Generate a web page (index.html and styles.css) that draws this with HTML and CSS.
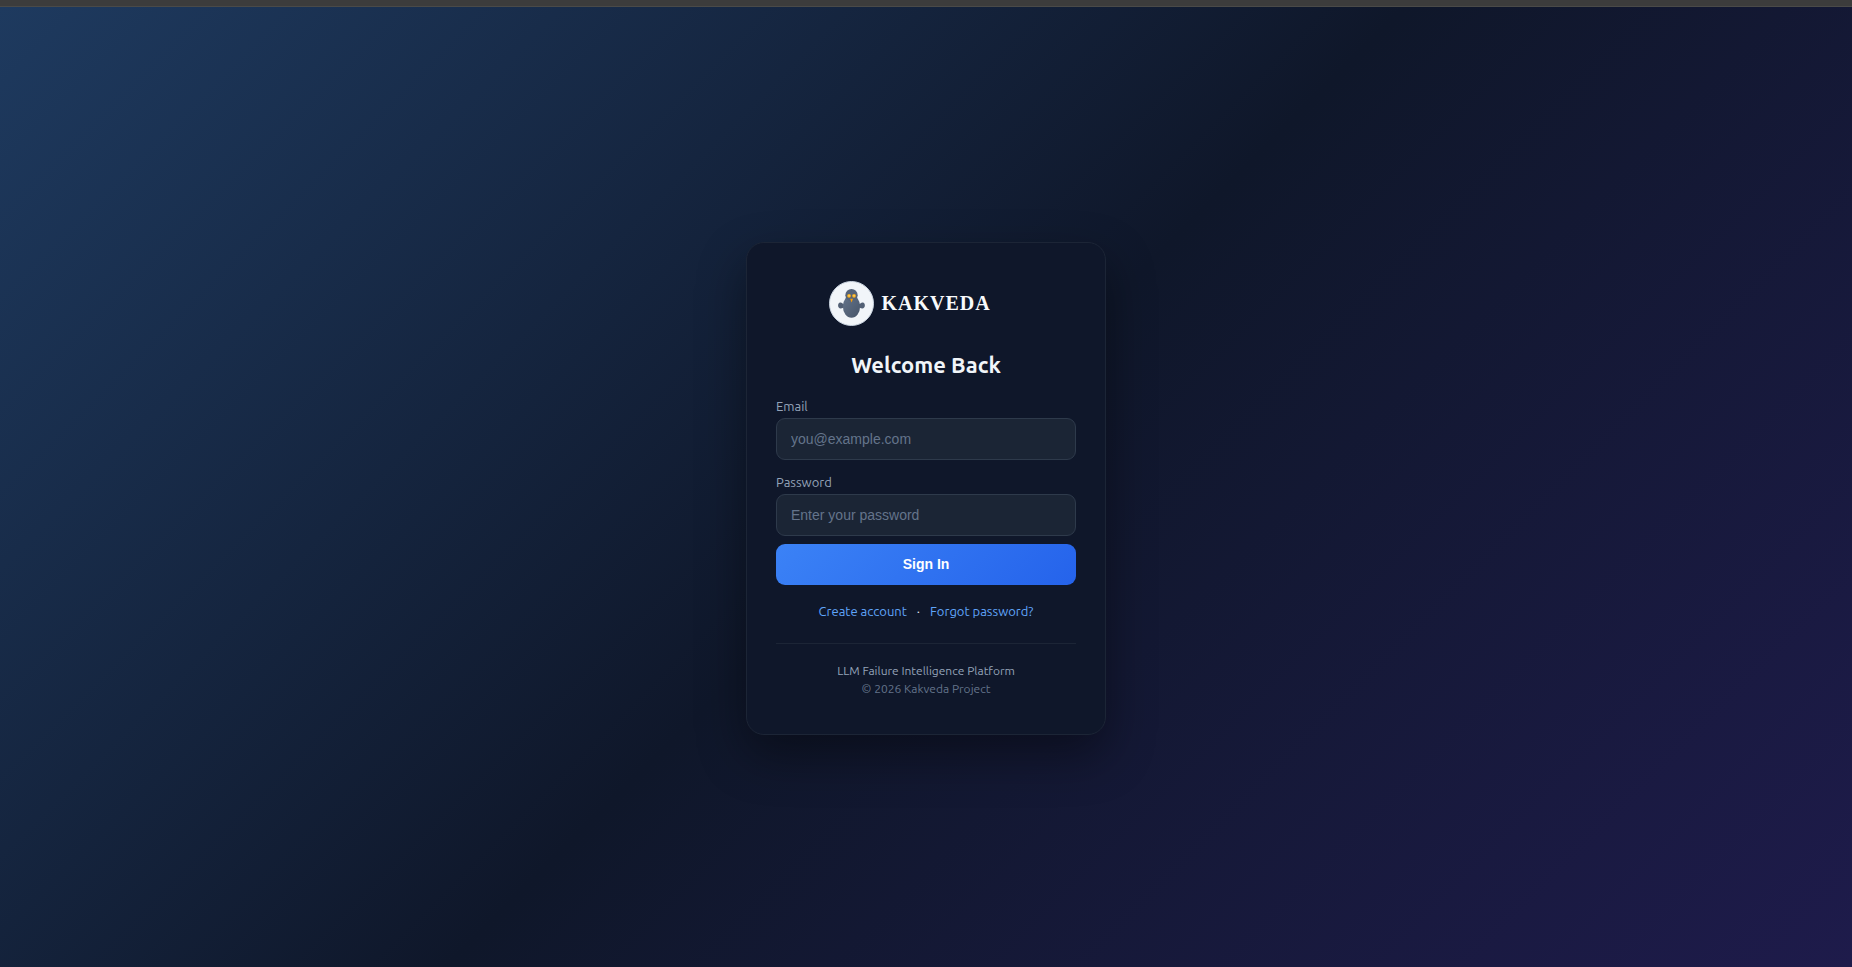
FILE: index.html
```html
<!DOCTYPE html>
<html lang="en">
<head>
    <meta charset="UTF-8">
    <meta name="viewport" content="width=device-width, initial-scale=1.0">
    <title>Kakveda - Sign In</title>
    <link rel="stylesheet" href="styles.css">
</head>
<body>
    <div class="top-strip"></div>

    <main class="login-page">
        <div class="login-card">
            <div class="brand">
                <svg class="brand-icon" viewBox="0 0 46 46" aria-hidden="true">
                    <defs>
                        <linearGradient id="crow" x1="0" y1="0" x2="1" y2="1">
                            <stop offset="0" stop-color="#64748b"/>
                            <stop offset="1" stop-color="#475569"/>
                        </linearGradient>
                    </defs>
                    <circle cx="23" cy="23" r="22.5" fill="#f1f5f9" stroke="#cbd5e1" stroke-width="1"/>
                    <!-- wings -->
                    <path d="M16 23.5C13.5 23.8 13.5 21.8 11.5 22C8.5 22.3 8.5 28 12 28.2C14 28.3 14.5 26.5 16 27Z" fill="#526075"/>
                    <path d="M30 23.5C32.5 23.8 32.5 21.8 34.5 22C37.5 22.3 37.5 28 34 28.2C32 28.3 31.5 26.5 30 27Z" fill="#526075"/>
                    <!-- body and head -->
                    <ellipse cx="23" cy="26" rx="8.8" ry="11.5" fill="url(#crow)"/>
                    <circle cx="23" cy="14.5" r="6.3" fill="#56647a"/>
                    <!-- eyes -->
                    <circle cx="20.5" cy="15.2" r="1.9" fill="#fbb01a"/>
                    <circle cx="25.6" cy="15.2" r="1.9" fill="#fbb01a"/>
                    <circle cx="20.5" cy="15.2" r="0.6" fill="#fef3c7"/>
                    <circle cx="25.6" cy="15.2" r="0.6" fill="#fef3c7"/>
                    <!-- beak -->
                    <path d="M21.6 18.2H24.6L23.1 22Z" fill="#f59e0b"/>
                </svg>
                <span class="brand-name">KAKVEDA</span>
            </div>

            <h1>Welcome Back</h1>

            <form class="login-form">
                <label for="email">Email</label>
                <input type="email" id="email" name="email" placeholder="you@example.com">
                <label for="password">Password</label>
                <input type="password" id="password" name="password" placeholder="Enter your password">
                <button type="submit">Sign In</button>
            </form>

            <div class="links">
                <a href="#">Create account</a>
                <span>·</span>
                <a href="#">Forgot password?</a>
            </div>

            <footer class="card-footer">
                <div>LLM Failure Intelligence Platform</div>
                <div class="copyright">© 2026 Kakveda Project</div>
            </footer>
        </div>
    </main>
</body>
</html>
```

FILE: styles.css
```css
* {
    box-sizing: border-box;
}
body {
    margin: 0;
    min-height: 100vh;
    display: flex;
    flex-direction: column;
    font-family: Ubuntu, "Noto Sans", sans-serif;
    color: #e2e8f0;
}
.top-strip {
    height: 7px;
    background: #3c3c3c;
    border-bottom: 1px solid #4a4a48;
}
.login-page {
    flex: 1;
    display: flex;
    align-items: center;
    justify-content: center;
    padding-top: 2px;
    background: linear-gradient(135deg, #1e3a5f 0%, #0f172a 50%, #1e1b4b 100%);
}
.login-card {
    width: 100%;
    max-width: 360px;
    padding: 38px 29px 36px;
    background: #0f172a;
    border: 1px solid #1c2536;
    border-radius: 18px;
    box-shadow: 0 20px 48px rgba(0, 0, 0, 0.4);
}
.brand {
    display: flex;
    align-items: center;
    gap: 8px;
    width: 195px;
    margin: 0 auto;
}
.brand-icon {
    width: 45px;
    height: 45px;
}
.brand-name {
    font-family: "Liberation Serif", serif;
    font-size: 20px;
    font-weight: 700;
    letter-spacing: 1px;
    color: #f8fafc;
}
h1 {
    margin: 25px 0 19px;
    font-size: 22px;
    line-height: 28px;
    font-weight: 600;
    text-align: center;
    color: #f1f5f9;
}
.login-form {
    display: flex;
    flex-direction: column;
}
label {
    margin-bottom: 4px;
    font-size: 13px;
    line-height: 16px;
    color: #94a3b8;
}
input {
    height: 42px;
    margin-bottom: 14px;
    padding: 0 14px;
    font-family: "Liberation Sans", Arial, sans-serif;
    font-size: 14px;
    color: #e2e8f0;
    background: #1b2535;
    border: 1px solid #2e3a4b;
    border-radius: 9px;
}
input::placeholder {
    color: #64748b;
}
#password {
    margin-bottom: 8px;
}
button {
    height: 41px;
    font-family: "Liberation Sans", Arial, sans-serif;
    font-size: 14px;
    font-weight: 700;
    color: #fff;
    background: linear-gradient(135deg, #3b82f6, #2563eb);
    border: none;
    border-radius: 9px;
    cursor: pointer;
}
.links {
    display: flex;
    justify-content: center;
    gap: 10px;
    margin-top: 16px;
    font-size: 13px;
    line-height: 20px;
}
.links a {
    color: #60a5fa;
    text-decoration: none;
}
.card-footer {
    margin-top: 22px;
    padding-top: 18px;
    border-top: 1px solid #1c2536;
    font-size: 12px;
    line-height: 18px;
    text-align: center;
    color: #94a3b8;
}
.copyright {
    color: #64748b;
}
```
